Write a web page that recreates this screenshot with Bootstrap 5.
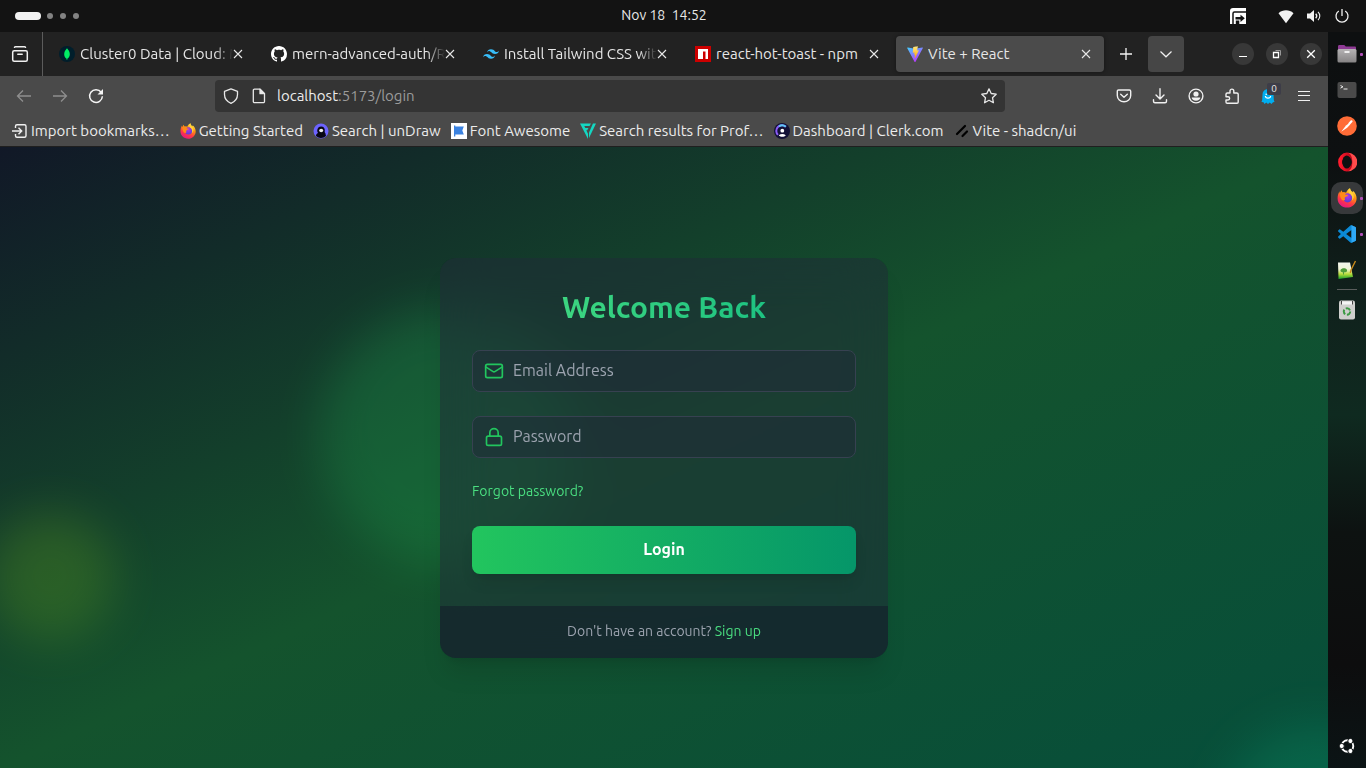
<!DOCTYPE html>
<html lang="en">
<head>
<meta charset="utf-8">
<meta name="viewport" content="width=device-width, initial-scale=1">
<title>Vite + React</title>
<link href="https://cdn.jsdelivr.net/npm/bootstrap@5.3.0/dist/css/bootstrap.min.css" rel="stylesheet">
<style>
  body { font-family: Ubuntu, "Noto Sans", sans-serif; background: #131313; color: #e8e8e8; }
  svg { display: block; flex: none; }
  button { color: inherit; }
  a { text-decoration: none; }
  .flat { background: none; border: 0; padding: 0; display: flex; align-items: center; justify-content: center; }

  /* desktop panel */
  .panel { height: 32px; background: #131313; font-size: 14px; }
  .panel time { line-height: 18px; padding-bottom: 2px; }
  .panel-start { flex: 1 1 15px; padding-left: 15px; gap: 6px; }
  .panel-end { flex: 1 1 53px; padding-right: 16px; gap: 12px; }
  .pill { width: 26px; height: 8px; border-radius: 4px; background: #f2f2f2; }
  .dot { width: 6px; height: 6px; border-radius: 50%; background: #828282; margin-right: 1px; }
  .tray-app { margin-right: 20px; }

  /* browser window */
  .browser { min-width: 0; }
  .tabbar { height: 44px; background: #222; font-size: 15px; padding-right: 6px; }
  .view-btn { width: 43px; height: 44px; padding-right: 2px; border-right: 1px solid #5c5c5c; margin-right: 5px; }
  .tab-item { flex: 0 1 208px; min-width: 0; height: 36px; border-radius: 4px; padding: 0 13px 0 11px; margin-right: 4px; }
  .tab-item .tab-link { color: #e6e6e6; gap: 5px; min-width: 0; flex: 1; }
  .tab-title { overflow: hidden; white-space: nowrap; flex: 1; line-height: 20px; }
  .tab-title.faded { -webkit-mask-image: linear-gradient(to left, transparent 0, #000 18px); mask-image: linear-gradient(to left, transparent 0, #000 18px); }
  .tab-item.current { background: #4b4b4b; box-shadow: 0 0 4px rgba(0,0,0,.4); }
  .tool { width: 36px; height: 36px; border-radius: 4px; }
  .tool.shaded { background: #464646; margin-left: 4px; }
  .win-group { gap: 12px; }
  .win-btn { width: 22px; height: 22px; border-radius: 50%; background: #383838; }
  .navbar-row { height: 40px; background: #4a4a4a; padding: 0 6px; }
  .address { height: 32px; margin: 0 101px; background: #343434; border-radius: 4px; padding: 0 8px; gap: 10px; font-size: 15px; }
  .shield { margin-right: 2px; }
  .address-text { color: #9b9b9b; line-height: 20px; }
  .address-text b { color: #ececec; font-weight: 400; }
  .counter { left: 17px; top: 5px; width: 14px; height: 12px; background: #3d3d48; border-radius: 2px; font-size: 10px; line-height: 12px; color: #eee; }
  .bookmarks { height: 31px; background: #4a4a4a; border-bottom: 1px solid #1f1f1f; padding-left: 11px; gap: 10px; font-size: 15px; white-space: nowrap; overflow: hidden; }
  .bookmarks a { color: #ececec; gap: 3px; line-height: 20px; }

  /* page */
  .viewport { background: linear-gradient(to bottom right, #111827, #14532d, #064e3b); }
  .blob { position: absolute; border-radius: 50%; filter: blur(24px); opacity: .2; }
  .blob-green { width: 256px; height: 256px; left: 24%; top: 26%; background: #22c55e; }
  .blob-emerald { width: 192px; height: 192px; left: 92%; top: 93%; background: #10b981; }
  .blob-lime { width: 128px; height: 128px; left: -1%; top: 59%; background: #84cc16; }
  .auth { max-width: 448px; border-radius: 16px; background: rgba(31,41,55,.5); backdrop-filter: blur(24px); box-shadow: 0 20px 25px -5px rgba(0,0,0,.1), 0 8px 10px -6px rgba(0,0,0,.1); }
  .auth-main { padding: 32px; }
  .auth h1 { font-size: 30px; line-height: 34px; font-weight: 700; margin-bottom: 26px; }
  .auth h1 span { display: block; color: transparent; background: linear-gradient(to right, #4ade80, #10b981); -webkit-background-clip: text; background-clip: text; }
  .field { margin-bottom: 24px; }
  .field label { left: 12px; top: 11px; color: #22c55e; }
  .field .form-control { height: 42px; padding: 7px 12px 9px 40px; font-size: 16px; line-height: 24px; border: 1px solid #374151; border-radius: 8px; background: rgba(31,41,55,.5); color: #fff; }
  .field .form-control::placeholder { color: #9ca3af; opacity: 1; }
  .auth a { color: #4ade80; }
  .small-line { font-size: 14px; line-height: 18px; }
  .forgot { margin-bottom: 26px; }
  .login-btn { height: 48px; padding: 0 0 2px; border: 0; border-radius: 8px; font-size: 16px; line-height: 24px; font-weight: 700; color: #fff; background: linear-gradient(to right, #22c55e, #059669); box-shadow: 0 10px 15px -3px rgba(0,0,0,.1), 0 4px 6px -4px rgba(0,0,0,.1); }
  .auth-foot { padding: 16px 32px 18px; background: rgba(17,24,39,.5); color: #9ca3af; border-radius: 0 0 16px 16px; }

  /* dock */
  .dock { width: 38px; flex: none; padding: 6px 3px 2px; background: linear-gradient(#0d0f10 0, #0d1011 18%, #10211c 36%, #0f2a20 52%, #0d1211 68%, #0d0d0e 86%, #0b1415 100%); }
  .dock-btn { width: 32px; height: 32px; border-radius: 10px; margin-bottom: 4px; position: relative; }
  .dock-btn.focused { background: #37393b; }
  .dock-btn.running::after { content: ""; position: absolute; right: 0; top: 15px; width: 3px; height: 3px; border-radius: 1px; background: #b04fb8; }
  .dock-rule { width: 20px; height: 1px; background: #5a5d5c; margin: -1px 0 4px; opacity: 1; border: 0; }
</style>
</head>
<body class="d-flex flex-column min-vh-100">

<svg width="0" height="0" class="position-absolute" aria-hidden="true">
  <defs>
    <linearGradient id="ffA" x1="0.8" y1="0" x2="0.3" y2="1"><stop offset="0" stop-color="#fff44f"/><stop offset=".35" stop-color="#ff980e"/><stop offset=".7" stop-color="#ff3647"/><stop offset="1" stop-color="#e31587"/></linearGradient>
    <radialGradient id="ffB" cx=".5" cy=".35" r=".6"><stop offset="0" stop-color="#b833e1"/><stop offset="1" stop-color="#5b3fd6"/></radialGradient>
    <linearGradient id="viteA" x1="0" y1="0" x2=".6" y2="1"><stop offset="0" stop-color="#41d1ff"/><stop offset="1" stop-color="#bd34fe"/></linearGradient>
    <linearGradient id="viteB" x1="0" y1="0" x2="0" y2="1"><stop offset="0" stop-color="#ffea83"/><stop offset="1" stop-color="#ffa800"/></linearGradient>
    <linearGradient id="opA" x1="0" y1="0" x2="1" y2="0"><stop offset="0" stop-color="#ff1b2d"/><stop offset="1" stop-color="#a70014"/></linearGradient>
    <linearGradient id="folderA" x1="0" y1="0" x2="0" y2="1"><stop offset="0" stop-color="#b5b3b4"/><stop offset="1" stop-color="#858384"/></linearGradient>
    <linearGradient id="npA" x1="0" y1="0" x2="0" y2="1"><stop offset="0" stop-color="#f4f7ee"/><stop offset=".4" stop-color="#f0f4d8"/><stop offset=".7" stop-color="#b8dc3a"/><stop offset="1" stop-color="#16a02c"/></linearGradient>
    <symbol id="x" viewBox="3 3 10 10"><path d="M4 4l8 8M12 4l-8 8" fill="none" stroke="currentColor" stroke-width="1.1"/></symbol>
    <symbol id="firefox" viewBox="0 0 20 20">
      <path d="M13 .2c.3 1.900 1.300 2.700 2.500 4 .5-.6.400-1 .300-1.500C18.300 4.600 19.600 7.500 19.600 10.500 19.600 15.600 15.300 19.600 10.100 19.600 4.900 19.600.6 15.700.6 10.400.6 8 1.200 5.400 2.500 3.200l.3 2C3.300 4.100 4 3 4.700 2.300l.7 2.200c1.400-.400 2.700-.2 3.700.3C9.700 2.800 11 1.100 13 .2z" fill="url(#ffA)"/>
      <circle cx="10.600" cy="9.800" r="4.600" fill="url(#ffB)"/>
      <path d="M2.800 5.200c2-1.300 4.300-1.200 6.200-.2-.7.600-.9 1-1 1.500 1 .4 2 .4 3.100.5-.2 1.300-1.700 1.400-2.700 2.100-.9.700-.8 1.800-.3 2.600C6 14 3 11 2.800 5.200z" fill="#ff8a16"/>
      <path d="M12.500 5.500c2.500 1.500 3.500 4.300 2.300 7.200 2.300-2 2.600-5 1-7.500C14.500 3.700 13.300 2.500 13 .2c-1.800 1.500-2 3.700-.5 5.300z" fill="#ffd13a"/>
    </symbol>
  </defs>
</svg>

<header class="panel d-flex align-items-center">
  <div class="panel-start d-flex align-items-center">
    <span class="pill"></span><span class="dot"></span><span class="dot"></span><span class="dot"></span>
  </div>
  <time>Nov 18 &nbsp;14:52</time>
  <div class="panel-end d-flex align-items-center justify-content-end">
    <svg class="tray-app" width="16" height="16" viewBox="0 0 16 16"><path d="M3 0h13v16H0V3a3 3 0 0 1 3-3z" fill="#fff"/><path d="M3 16V5.500C3 4.500 3.500 4 4.500 4H16" fill="none" stroke="#131313" stroke-width="1.500"/><path d="M5.800 16v-3.500h3.500V16z" fill="#131313"/><path d="M5.500 9h5V6.700l4.300 3.600-4.300 3.600v-2.300h-5z" fill="#131313"/></svg>
    <svg width="16" height="16" viewBox="0 0 16 16"><path d="M8 15.200.5 5.200C4.800 1.400 11.200 1.400 15.500 5.200z" fill="#f2f2f2"/></svg>
    <svg width="16" height="16" viewBox="0 0 16 16" fill="none" stroke="#f2f2f2"><path d="M1 5.500h3L8 2v12l-4-3.500H1z" fill="#f2f2f2" stroke="none"/><path d="M9.700 5.700c1.200 1.300 1.200 3.300 0 4.600" stroke-width="1.300"/><path d="M12 3.800c2.400 2.400 2.400 6 0 8.400" stroke-width="1.100"/></svg>
    <svg width="16" height="16" viewBox="0 0 16 16" fill="none" stroke="#f2f2f2" stroke-width="1.300"><path d="M4.800 3a6 6 0 1 0 6.400 0M8 1v7"/></svg>
  </div>
</header>

<div class="d-flex flex-grow-1">
  <div class="browser d-flex flex-column flex-grow-1">

    <div class="tabbar d-flex align-items-center">
      <button class="flat view-btn" type="button" aria-label="Firefox View"><svg width="18" height="18" viewBox="0 0 18 18" fill="none" stroke="#f0f0f0" stroke-width="1.500"><rect x="1.700" y="5.700" width="14.600" height="10.600" rx="1.500"/><path d="M3.500 2.300A1.200 1.200 0 0 1 4.500 1.700h9a1.200 1.200 0 0 1 1 .6M6.800 9.300h4.400" stroke-linecap="round"/></svg></button>

      <div class="tab-item d-flex align-items-center">
        <a class="tab-link d-flex align-items-center" href="#"><svg width="16" height="16" viewBox="0 0 16 16"><circle cx="8" cy="8" r="8" fill="#001e2b"/><path d="M8 2.300c1.700 1.900 2.800 3.600 2.800 5.900 0 2-1.100 3.500-2.500 4.500L8.200 14h-.5l-.1-1.300C6.200 11.700 5.200 10.200 5.200 8.200c0-2.300 1.100-4 2.800-5.900z" fill="#00ed64"/></svg><span class="tab-title faded">Cluster0 Data | Cloud: M</span></a>
        <button class="flat" type="button" aria-label="Close tab"><svg width="10" height="10"><use href="#x"/></svg></button>
      </div>
      <div class="tab-item d-flex align-items-center">
        <a class="tab-link d-flex align-items-center" href="#"><svg width="16" height="16" viewBox="0 0 16 16"><path fill="#fff" d="M8 0C3.580 0 0 3.580 0 8c0 3.540 2.290 6.530 5.470 7.590.4.070.55-.17.55-.38 0-.19-.010-.82-.010-1.490-2.010.37-2.530-.49-2.690-.94-.090-.23-.48-.94-.82-1.130-.28-.15-.68-.52-.010-.53.63-.010 1.080.58 1.230.82.72 1.210 1.870.87 2.330.66.070-.52.28-.87.51-1.070-1.780-.2-3.640-.89-3.640-3.950 0-.87.31-1.590.82-2.150-.080-.2-.36-1.020.080-2.120 0 0 .67-.21 2.200.82.64-.18 1.320-.27 2-.27s1.360.090 2 .27c1.530-1.040 2.200-.82 2.200-.82.44 1.100.16 1.920.080 2.120.51.56.82 1.270.82 2.150 0 3.070-1.870 3.750-3.650 3.950.29.25.54.73.54 1.480 0 1.070-.010 1.930-.010 2.200 0 .21.15.46.55.38A8.010 8.010 0 0 0 16 8c0-4.420-3.580-8-8-8z"/></svg><span class="tab-title faded">mern-advanced-auth/R</span></a>
        <button class="flat" type="button" aria-label="Close tab"><svg width="10" height="10"><use href="#x"/></svg></button>
      </div>
      <div class="tab-item d-flex align-items-center">
        <a class="tab-link d-flex align-items-center" href="#"><svg width="16" height="16" viewBox="0 0 24 24"><path fill="#38bdf8" d="M12 4.800c-3.200 0-5.200 1.600-6 4.800 1.200-1.600 2.600-2.200 4.200-1.800.913.228 1.565.89 2.288 1.624C13.666 10.618 15.027 12 18 12c3.200 0 5.200-1.600 6-4.800-1.200 1.600-2.600 2.200-4.200 1.800-.913-.228-1.565-.89-2.288-1.624C16.337 6.182 14.976 4.800 12 4.800zM6 12c-3.200 0-5.200 1.600-6 4.800 1.200-1.600 2.600-2.200 4.200-1.800.913.228 1.565.89 2.288 1.624C7.666 17.818 9.027 19.200 12 19.200c3.200 0 5.200-1.600 6-4.800-1.200 1.600-2.600 2.200-4.200 1.800-.913-.228-1.565-.89-2.288-1.624C10.337 13.382 8.976 12 6 12z"/></svg><span class="tab-title faded">Install Tailwind CSS wit</span></a>
        <button class="flat" type="button" aria-label="Close tab"><svg width="10" height="10"><use href="#x"/></svg></button>
      </div>
      <div class="tab-item d-flex align-items-center">
        <a class="tab-link d-flex align-items-center" href="#"><svg width="16" height="16" viewBox="0 0 16 16"><path fill="#c00" d="M0 0h16v16H0z"/><path fill="#fff" d="M3 3h10v10h-2.500V5.500H8V13H3z"/></svg><span class="tab-title">react-hot-toast - npm</span></a>
        <button class="flat" type="button" aria-label="Close tab"><svg width="10" height="10"><use href="#x"/></svg></button>
      </div>
      <div class="tab-item current d-flex align-items-center">
        <a class="tab-link d-flex align-items-center" href="#"><svg width="16" height="16" viewBox="0 0 16 16"><path d="M.3 2.200 7.500 15.700a.6.600 0 0 0 1 0L15.800 2.200a.5.500 0 0 0-.5-.7L8 2.800.8 1.500a.5.500 0 0 0-.5.700z" fill="url(#viteA)"/><path d="M11.500.1 6.400 1.100a.3.300 0 0 0-.2.200L5.800 6.600c0 .2.200.3.300.2l1.500-.3-.5 2c0 .200.100.3.300.300l.9-.3-.7 3.300c0 .2.200.3.400.100l3.800-7.300c.1-.2-.1-.4-.3-.4l-1.500.3.900-4.100c0-.200-.2-.3-.4-.3z" fill="url(#viteB)"/></svg><span class="tab-title">Vite + React</span></a>
        <button class="flat" type="button" aria-label="Close tab"><svg width="10" height="10"><use href="#x"/></svg></button>
      </div>

      <button class="flat tool" type="button" aria-label="New tab"><svg width="16" height="16" viewBox="0 0 16 16"><path d="M8 2v12M2 8h12" stroke="#f4f4f4" stroke-width="1.300"/></svg></button>
      <button class="flat tool shaded" type="button" aria-label="List all tabs"><svg width="16" height="16" viewBox="0 0 16 16"><path d="M2.500 5.500 8 10.800l5.500-5.300" fill="none" stroke="#f0f0f0" stroke-width="1.200"/></svg></button>
      <div class="win-group d-flex ms-auto">
        <button class="flat win-btn" type="button" aria-label="Minimize"><svg width="16" height="16" viewBox="0 0 16 16"><path d="M4 10.500h8" stroke="#fff"/></svg></button>
        <button class="flat win-btn" type="button" aria-label="Restore"><svg width="16" height="16" viewBox="0 0 16 16" fill="none"><path d="M4.500 6.500h5v5h-5z" stroke="#fff" stroke-width="1.300"/><path d="M6.500 4.500h5v5" stroke="#999"/></svg></button>
        <button class="flat win-btn" type="button" aria-label="Close"><svg width="16" height="16" viewBox="0 0 16 16"><path d="M4.200 4.200l7.600 7.600M11.800 4.200l-7.600 7.600" stroke="#fff" stroke-width="1.300"/></svg></button>
      </div>
    </div>

    <nav class="navbar-row d-flex align-items-center">
      <button class="flat tool" type="button" aria-label="Back" disabled><svg width="16" height="16" viewBox="0 0 16 16" fill="none" stroke="#8e8e8e" stroke-width="1.300"><path d="M15 8H1.500M7 2.500 1.500 8 7 13.500"/></svg></button>
      <button class="flat tool" type="button" aria-label="Forward" disabled><svg width="16" height="16" viewBox="0 0 16 16" fill="none" stroke="#8e8e8e" stroke-width="1.300"><path d="M1 8h13.500M9 2.500 14.500 8 9 13.500"/></svg></button>
      <button class="flat tool" type="button" aria-label="Reload"><svg width="16" height="16" viewBox="0 0 16 16" fill="none" stroke="#f4f4f4" stroke-width="1.500"><path d="M13.200 4.300A6.400 6.400 0 1 0 14.400 8.300"/><path d="M15 1v5.500H9.500z" fill="#f4f4f4" stroke="none"/></svg></button>
      <div class="address d-flex align-items-center flex-grow-1">
        <svg class="shield" width="16" height="16" viewBox="0 0 16 16" fill="none" stroke="#e8e8e8" stroke-width="1.300" stroke-linejoin="round"><path d="M8 .8 14.500 3.300v3.200c0 4-2.300 7-6.500 8.800C3.800 13.500 1.500 10.500 1.500 6.500V3.300z"/></svg>
        <svg width="16" height="16" viewBox="0 0 16 16" fill="none" stroke="#e8e8e8" stroke-width="1.300" stroke-linejoin="round"><path d="M3.500 1.200H9L13.500 5.700V13.500a1.200 1.200 0 0 1-1.200 1.200H3.500a1.200 1.200 0 0 1-1.200-1.200V2.400a1.200 1.200 0 0 1 1.200-1.200z"/><path d="M9 1.200V5.700h4.500z" fill="#e8e8e8"/></svg>
        <span class="address-text flex-grow-1"><b>localhost</b>:5173/login</span>
        <button class="flat" type="button" aria-label="Bookmark this page"><svg width="16" height="16" viewBox="0 0 16 16" fill="none" stroke="#e8e8e8" stroke-width="1.300" stroke-linejoin="round"><path d="M8 .9l2.200 4.600 5 .7-3.700 3.500.9 5L8 12.300l-4.400 2.400.9-5L.8 6.200l5-.7z"/></svg></button>
      </div>
      <button class="flat tool" type="button" aria-label="Pocket"><svg width="16" height="16" viewBox="0 0 16 16" fill="none" stroke="#f0f0f0" stroke-width="1.400" stroke-linecap="round" stroke-linejoin="round"><path d="M2.600 2h10.800c.8 0 1.300.5 1.300 1.300V7.500a6.700 6.300 0 0 1-13.400 0V3.300C1.300 2.500 1.800 2 2.600 2z"/><path d="M4.700 6.300 8 9.300l3.300-3"/></svg></button>
      <button class="flat tool" type="button" aria-label="Downloads"><svg width="16" height="16" viewBox="0 0 16 16" fill="none" stroke="#f0f0f0" stroke-width="1.400" stroke-linecap="round" stroke-linejoin="round"><path d="M8 .8v10M4 7l4 4 4-4M1.500 11.700v1.500c0 .9.600 1.500 1.500 1.500h10c.9 0 1.500-.6 1.500-1.500v-1.500"/></svg></button>
      <button class="flat tool" type="button" aria-label="Account"><svg width="16" height="16" viewBox="0 0 16 16"><circle cx="8" cy="8" r="6.900" fill="none" stroke="#f0f0f0" stroke-width="1.400"/><circle cx="8" cy="6" r="2.600" fill="#f0f0f0"/><path d="M3.700 9.500h8.600c0 1.900-1.900 3.300-4.300 3.300S3.700 11.400 3.700 9.500z" fill="#f0f0f0"/></svg></button>
      <button class="flat tool" type="button" aria-label="Extensions"><svg width="16" height="16" viewBox="0 0 16 16" fill="none" stroke="#f0f0f0" stroke-width="1.400" stroke-linejoin="round"><path d="M2 8.700V6.300C2 5.400 2.500 5 3.300 5H6V3a1.900 1.900 0 0 1 3.800 0v2h3c.9 0 1.400.5 1.400 1.300V14c0 .7-.5 1.200-1.200 1.200H3.200c-.7 0-1.200-.5-1.200-1.200v-2h2a1.600 1.600 0 0 0 0-3.300z"/></svg></button>
      <button class="flat tool position-relative" type="button" aria-label="Ghostery"><svg width="16" height="16" viewBox="0 0 16 16"><path d="M2.500 6.500a5.500 5.500 0 0 1 11 0l.3 5.500.7 2-1.500.2L11.500 16 9.700 14.500 8 16l-1.700-1.500L4.500 16l-1-1.800L1.500 14l.7-2z" fill="#00aef0"/><path d="M5.300 8c.5 2.800 4.900 2.800 5.400 0" stroke="#fff" fill="none" stroke-width="1.200"/><circle cx="6.200" cy="6.300" r=".8" fill="#fff"/></svg><span class="counter position-absolute text-center">0</span></button>
      <button class="flat tool" type="button" aria-label="Menu"><svg width="16" height="16" viewBox="0 0 16 16"><path d="M2 3.500h12M2 7.500h12M2 12.500h12" stroke="#f0f0f0" stroke-width="1"/></svg></button>
    </nav>

    <nav class="bookmarks d-flex align-items-center">
      <a class="d-flex align-items-center" href="#"><svg width="17" height="16" viewBox="0 0 17 16" fill="none" stroke="#f0f0f0" stroke-width="1.400"><path d="M4.500 5V3.300c0-.8.600-1.500 1.500-1.500h7.500c.9 0 1.500.7 1.500 1.500v9.400c0 .8-.6 1.500-1.500 1.500H6c-.9 0-1.500-.7-1.500-1.500V11M1 8h9.500M7.500 4.800 10.700 8l-3.200 3.200"/></svg>Import bookmarks…</a>
      <a class="d-flex align-items-center" href="#"><svg width="16" height="16"><use href="#firefox"/></svg>Getting Started</a>
      <a class="d-flex align-items-center" href="#"><svg width="16" height="16" viewBox="0 0 16 16"><circle cx="8" cy="8" r="7.500" fill="#6c63ff"/><path d="M4.300 8.500c-.5-3 1.500-5 3.900-5 2.500 0 4 2 3.500 4.800-.1.900.2 1.500.7 2L13 13a7.200 7.200 0 0 1-10 0c0-1.500.7-2.500 2-3z" fill="#090814"/><ellipse cx="8.200" cy="7.500" rx="2" ry="1.700" fill="#eee"/></svg>Search | unDraw</a>
      <a class="d-flex align-items-center" href="#"><svg width="16" height="16" viewBox="0 0 16 16"><path fill="#fff" d="M0 0h16v16H0z"/><path d="M3 2.500h1.300v1h8.500L11.300 7.500l1.500 4H4.300v2H3z" fill="#3b82e0"/></svg>Font Awesome</a>
      <a class="d-flex align-items-center" href="#"><svg width="16" height="16" viewBox="0 0 16 16" fill="#15d6c2"><path d="M0 .5h11L9.500 3H4.300l1 2h3.200L7.200 7.200H6.300L8 10.800V16z"/><path d="M13 .5h3L9 15V9.500z"/></svg>Search results for Prof…</a>
      <a class="d-flex align-items-center" href="#"><svg width="16" height="16" viewBox="0 0 16 16"><circle cx="8" cy="8" r="8" fill="#131136"/><path d="M11.800 3.800A5.500 5.500 0 0 0 4 11.900" fill="none" stroke="#8b5cf6" stroke-width="2"/><path d="M11.800 3.800A5.500 5.500 0 0 0 5 3.500" fill="none" stroke="#5fc8f5" stroke-width="2"/><circle cx="8.300" cy="7.700" r="1.900" fill="#fff"/><path d="M4.800 12.200c2-1.500 5-1.500 7 0-1.800 2-5.200 2-7 0z" fill="#fff"/></svg>Dashboard | Clerk.com</a>
      <a class="d-flex align-items-center" href="#"><svg width="16" height="16" viewBox="0 0 16 16" stroke="#000" stroke-width="2.200" stroke-linecap="round"><path d="M13 8.500 8.500 13M11 3 3 11"/></svg>Vite - shadcn/ui</a>
    </nav>

    <main class="viewport position-relative overflow-hidden flex-grow-1 d-flex align-items-center justify-content-center">
      <div class="blob blob-green"></div>
      <div class="blob blob-emerald"></div>
      <div class="blob blob-lime"></div>
      <section class="auth w-100">
        <form class="auth-main">
          <h1 class="text-center"><span>Welcome Back</span></h1>
          <div class="field position-relative">
            <label class="position-absolute" for="email" aria-label="Email Address"><svg width="20" height="20" viewBox="0 0 24 24" fill="none" stroke="currentColor" stroke-width="2" stroke-linecap="round" stroke-linejoin="round"><rect x="2" y="4" width="20" height="16" rx="2"/><path d="m22 7-8.970 5.700a1.940 1.940 0 0 1-2.060 0L2 7"/></svg></label>
            <input class="form-control" id="email" type="email" placeholder="Email Address">
          </div>
          <div class="field position-relative">
            <label class="position-absolute" for="password" aria-label="Password"><svg width="20" height="20" viewBox="0 0 24 24" fill="none" stroke="currentColor" stroke-width="2" stroke-linecap="round" stroke-linejoin="round"><rect x="3" y="11" width="18" height="11" rx="2"/><path d="M7 11V7a5 5 0 0 1 10 0v4"/></svg></label>
            <input class="form-control" id="password" type="password" placeholder="Password">
          </div>
          <div class="forgot small-line d-flex"><a href="#">Forgot password?</a></div>
          <button class="login-btn w-100" type="submit">Login</button>
        </form>
        <div class="auth-foot small-line text-center">Don't have an account? <a href="#">Sign up</a></div>
      </section>
    </main>
  </div>

  <aside class="dock d-flex flex-column align-items-center" aria-label="Dock">
    <button class="flat dock-btn running" type="button" aria-label="Files"><svg width="20" height="20" viewBox="0 0 20 20"><path d="M1 2.500C1 1.700 1.500 1 2.300 1h5l1.500 1.500h9c.7 0 1.200.5 1.200 1.200V8H1z" fill="#8e3a94"/><rect x=".5" y="5" width="19" height="13.500" rx="1.500" fill="url(#folderA)"/><path d="M7.500 7h5v2h-5z" fill="#eee"/></svg></button>
    <button class="flat dock-btn" type="button" aria-label="Terminal"><svg width="20" height="20" viewBox="0 0 20 20"><rect x=".5" y="2" width="19" height="16" rx="2" fill="#4a4a4a"/><path d="M3.500 5.500l2.500 1.300-2.500 1.300M6.500 9h4" fill="none" stroke="#e8e8e8"/></svg></button>
    <button class="flat dock-btn" type="button" aria-label="Postman"><svg width="20" height="20" viewBox="0 0 20 20"><circle cx="10" cy="10" r="9.800" fill="#ff6c37"/><path d="M4.200 15.800 9 9.500l3-2.300 1.200 1.200-3 3.300z" fill="#fff"/><path d="M12.500 7.500l2-2.200" stroke="#fff" stroke-width="2.200" stroke-linecap="round"/></svg></button>
    <button class="flat dock-btn" type="button" aria-label="Opera"><svg width="20" height="20" viewBox="0 0 20 20"><ellipse cx="10" cy="10" rx="6.900" ry="7.400" fill="none" stroke="url(#opA)" stroke-width="4"/><path d="M11 .7a9.300 9.300 0 0 1 0 18.600c2.700-1 4.300-4.300 4.300-9.300S13.700 1.700 11 .7z" fill="#ff4b4b"/><ellipse cx="9.700" cy="10" rx="4.200" ry="6.600" fill="#0d1011"/></svg></button>
    <button class="flat dock-btn focused running" type="button" aria-label="Firefox"><svg width="20" height="20"><use href="#firefox"/></svg></button>
    <button class="flat dock-btn running" type="button" aria-label="Visual Studio Code"><svg width="18" height="18" viewBox="0 0 24 24"><path fill="#0b8ad6" d="M23.150 2.587L18.210.21a1.494 1.494 0 0 0-1.705.29l-9.460 8.630-4.120-3.128a.999.999 0 0 0-1.276.057L.327 7.261A1 1 0 0 0 .326 8.740L3.899 12 .326 15.260a1 1 0 0 0 .001 1.479L1.650 17.940a.999.999 0 0 0 1.276.057l4.120-3.128 9.460 8.630a1.492 1.492 0 0 0 1.704.29l4.942-2.377A1.500 1.500 0 0 0 24 20.060V3.939a1.500 1.500 0 0 0-.85-1.352zm-5.146 14.861L10.826 12l7.178-5.448v10.896z"/><path fill="#2fa8f5" d="M18 .2l5.200 2.400c.5.300.8.800.8 1.400v16c0 .6-.3 1.200-.8 1.400L18 23.800z"/></svg></button>
    <button class="flat dock-btn" type="button" aria-label="Notepadqq"><svg width="20" height="20" viewBox="0 0 20 20"><path d="M1 2.500h12L16 17 1.500 19z" fill="url(#npA)"/><path d="M3.500 10c1-2.500 6-2.500 6.500 0s-2 2-3 2.500v2H6v-2C4.500 12 3 11.500 3.500 10z" fill="#4f9c3a"/><path d="M18.500 1 14 10l-.7 3" stroke="#c98a1c" stroke-width="1.400" fill="none"/></svg></button>
    <hr class="dock-rule">
    <button class="flat dock-btn" type="button" aria-label="Trash"><svg width="20" height="20" viewBox="0 0 20 20"><rect x="2" y=".5" width="16" height="19" rx="2" fill="#cfcfcd"/><path d="M4.500 1.500h11v3h-11z" fill="#f5f5f5"/><path d="M4.500 1v3.500M15.500 1v3.500" stroke="#444"/><circle cx="10" cy="11.500" r="3.200" fill="none" stroke="#3c9a44" stroke-width="2" stroke-dasharray="5 1.700"/></svg></button>
    <button class="flat dock-btn mt-auto" type="button" aria-label="Show applications"><svg width="20" height="20" viewBox="0 0 20 20"><circle cx="10.500" cy="10" r="5.800" fill="none" stroke="#fff" stroke-width="1.900"/><g fill="#fff" stroke="#0c1213" stroke-width="1"><circle cx="4.700" cy="10" r="2.600"/><circle cx="13.400" cy="5" r="2.600"/><circle cx="13.400" cy="15" r="2.600"/></g></svg></button>
  </aside>
</div>

<script src="https://cdn.jsdelivr.net/npm/bootstrap@5.3.0/dist/js/bootstrap.bundle.min.js"></script>
</body>
</html>
